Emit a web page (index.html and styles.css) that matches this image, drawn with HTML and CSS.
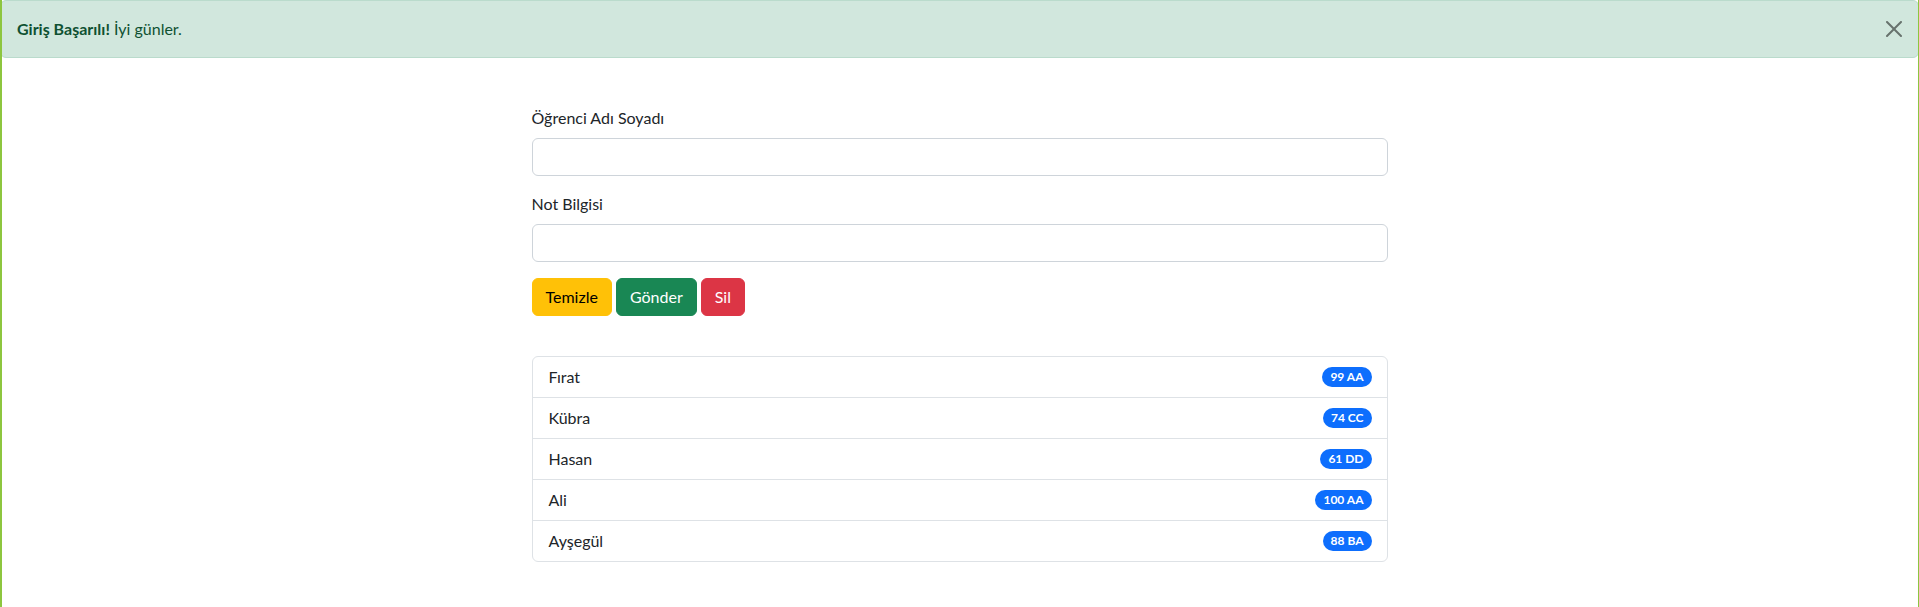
FILE: index.html
```html
<!DOCTYPE html>
<html lang="tr">
<head>
<meta charset="utf-8">
<title>Öğrenci Notları</title>
<link rel="stylesheet" href="styles.css">
</head>
<body>
<div class="frame-left"></div>
<div class="frame-right"></div>
<div class="alert">
  <span><strong>Giriş Başarılı!</strong> İyi günler.</span>
  <button class="btn-close" type="button" aria-label="Kapat">
    <svg viewBox="0 0 16 16" width="16" height="16"><path d="M.293.293a1 1 0 0 1 1.414 0L8 6.586 14.293.293a1 1 0 1 1 1.414 1.414L9.414 8l6.293 6.293a1 1 0 0 1-1.414 1.414L8 9.414l-6.293 6.293a1 1 0 0 1-1.414-1.414L6.586 8 .293 1.707a1 1 0 0 1 0-1.414z"/></svg>
  </button>
</div>
<main class="content">
  <form class="form">
    <div class="field">
      <label class="label" for="ad">Öğrenci Adı Soyadı</label>
      <input class="input" id="ad" type="text">
    </div>
    <div class="field">
      <label class="label" for="not">Not Bilgisi</label>
      <input class="input" id="not" type="text">
    </div>
    <div class="buttons">
      <button class="btn btn-warning" type="button">Temizle</button>
      <button class="btn btn-success" type="button">Gönder</button>
      <button class="btn btn-danger" type="button">Sil</button>
    </div>
  </form>
  <ul class="list">
    <li class="item"><span>Fırat</span><span class="badge">99 AA</span></li>
    <li class="item"><span>Kübra</span><span class="badge">74 CC</span></li>
    <li class="item"><span>Hasan</span><span class="badge">61 DD</span></li>
    <li class="item"><span>Ali</span><span class="badge">100 AA</span></li>
    <li class="item"><span>Ayşegül</span><span class="badge">88 BA</span></li>
  </ul>
</main>
</body>
</html>
```

FILE: styles.css
```css
* { box-sizing: border-box; }
html, body { margin: 0; padding: 0; }
body {
  font-family: "Segoe UI", Lato, "Noto Sans", sans-serif;
  font-size: 16px;
  line-height: 24px;
  color: #212529;
  background: #fff;
  min-height: 607px;
}
.frame-left, .frame-right {
  position: fixed;
  top: 0;
  bottom: 0;
  background: #8dc63f;
  z-index: 10;
}
.frame-left { left: 0; width: 2px; }
.frame-right { right: 0; width: 1px; }

.alert {
  position: relative;
  display: flex;
  align-items: center;
  padding: 16px 64px 16px 16px;
  background: #d1e7dd;
  border: 1px solid #badbcc;
  border-radius: 6px;
  color: #0f5132;
}
.alert strong { font-weight: 700; }
.btn-close {
  position: absolute;
  top: 0;
  right: 0;
  padding: 20px 16px;
  border: 0;
  background: transparent;
  opacity: .5;
  line-height: 0;
  cursor: pointer;
}
.btn-close svg { display: block; fill: #000; }

.content {
  width: 856px;
  margin: 48px auto 0;
}
.field { margin-bottom: 16px; }
.label {
  display: block;
  margin-bottom: 8px;
}
.input {
  display: block;
  width: 100%;
  height: 38px;
  padding: 6px 12px;
  font: inherit;
  border: 1px solid #ced4da;
  border-radius: 6px;
  background: #fff;
}
.buttons {
  display: flex;
  gap: 4px;
}
.btn {
  height: 38px;
  padding: 6px 13px;
  font: inherit;
  border: 1px solid transparent;
  border-radius: 6px;
  cursor: pointer;
}
.btn-warning { background: #ffc107; border-color: #ffc107; color: #000; }
.btn-success { background: #198754; border-color: #198754; color: #fff; }
.btn-danger { background: #dc3545; border-color: #dc3545; color: #fff; }

.list {
  list-style: none;
  margin: 40px 0 0;
  padding: 0;
  border: 1px solid #dee2e6;
  border-radius: 6px;
}
.item {
  display: flex;
  justify-content: space-between;
  align-items: center;
  padding: 8px 15px 8px 16px;
  height: 41px;
  border-bottom: 1px solid #dee2e6;
}
.item:last-child { border-bottom: 0; height: 40px; }
.badge {
  display: inline-block;
  padding: 4px 8px;
  font-size: 12px;
  font-weight: 700;
  line-height: 12px;
  color: #fff;
  background: #0d6efd;
  border-radius: 999px;
}
```
